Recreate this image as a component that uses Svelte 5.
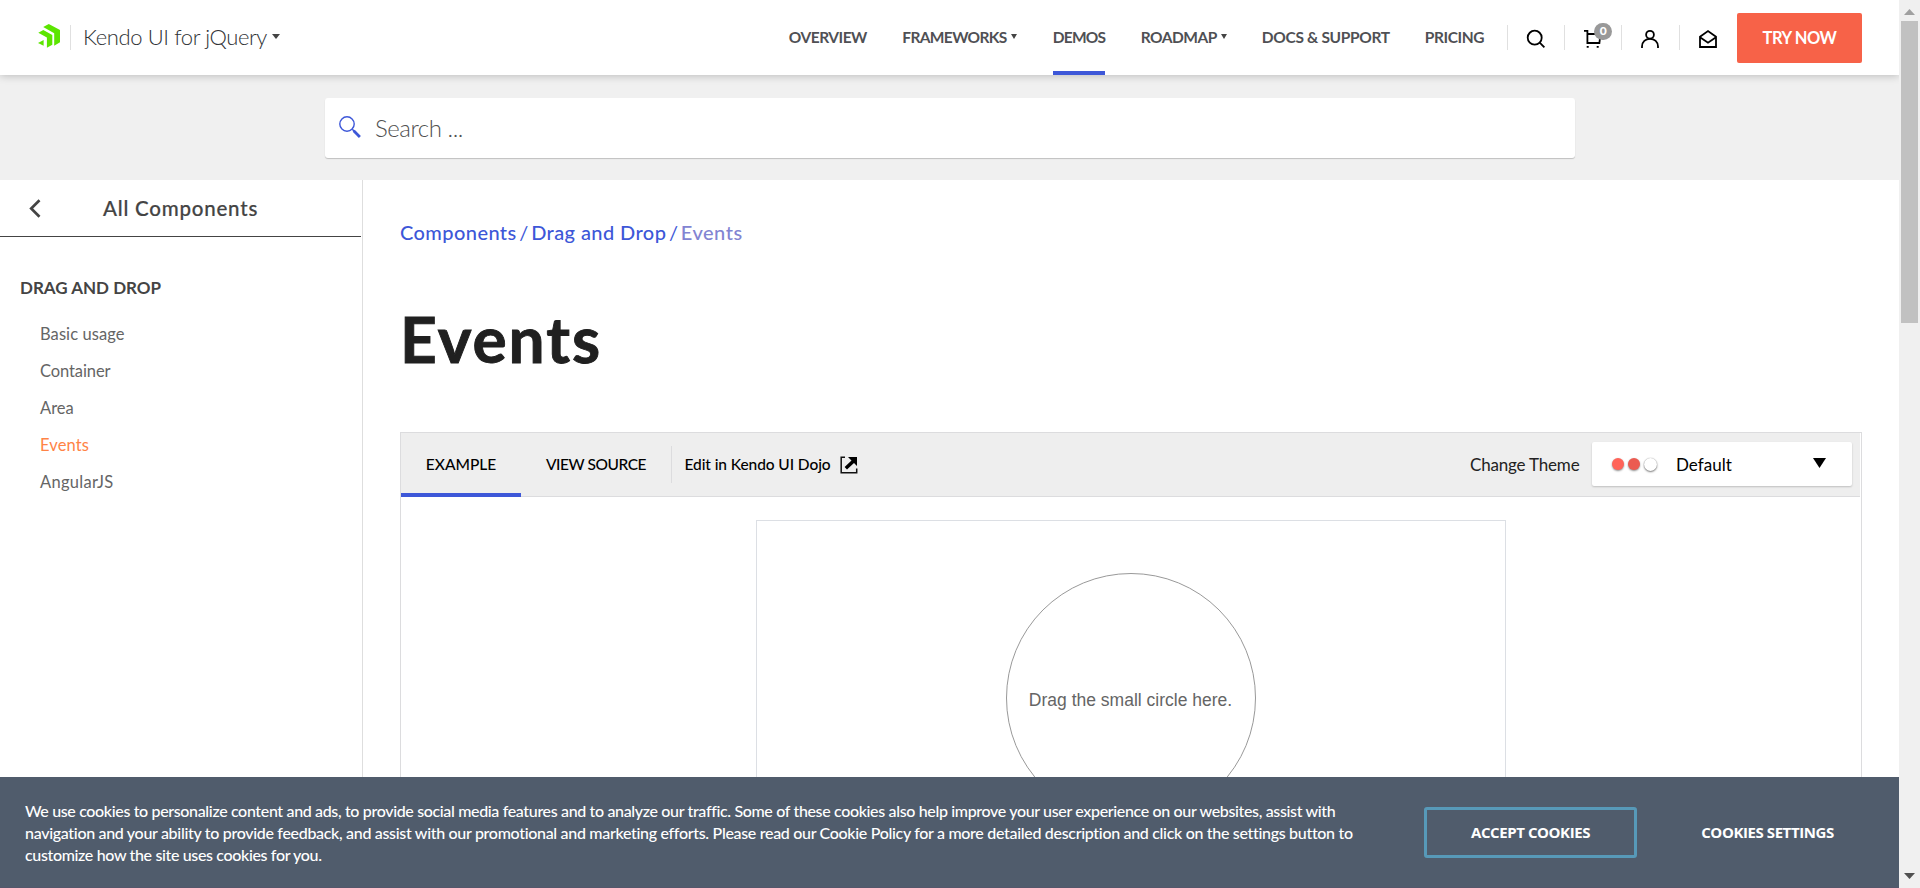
<script>
  const nav = [
    { label: 'OVERVIEW', w: 113.5, ls: -0.5 },
    { label: 'FRAMEWORKS', w: 150.5, ls: -0.65, caret: true },
    { label: 'DEMOS', w: 88, ls: -0.78, active: true },
    { label: 'ROADMAP', w: 121, ls: -0.5, caret: true },
    { label: 'DOCS & SUPPORT', w: 163, ls: -0.32 },
    { label: 'PRICING', w: 82, ls: -0.42 }
  ];
  const items = [
    { label: 'Basic usage', ls: 0.08 },
    { label: 'Container', ls: -0.1 },
    { label: 'Area', ls: 0 },
    { label: 'Events', ls: 0.1, active: true },
    { label: 'AngularJS', ls: 0.3 }
  ];
</script>

<div class="page">
  <div class="view">
    <header>
      <svg class="logo" width="22" height="24" viewBox="0 0 22 24" fill="#5ce500">
        <path d="M5.2 2.9 10.8 0 22 6.1v12.200l-5.800 3.500V9.300z" />
        <path d="M.3 8.800 5.300 6.100 14.300 10.900V20.700L8.900 23.800V13.500z" />
        <path d="M0 19 5.600 16.100V21.800z" />
      </svg>
      <i class="vr"></i>
      <span class="product">Kendo UI for jQuery</span>
      <i class="caret"></i>
      <nav>
        {#each nav as n}
          <a style="width:{n.w}px">
            <span class:active={n.active} style="letter-spacing:{n.ls}px">{n.label}</span>
            {#if n.caret}<i class="caret"></i>{/if}
          </a>
        {/each}
      </nav>
      <div class="tools">
        <a>
          <svg width="20" height="20" viewBox="0 0 20 20"><circle cx="8.700" cy="8.700" r="7" /><path d="m13.700 13.700 4.700 4.700" /></svg>
        </a>
        <a>
          <svg width="20" height="20" viewBox="0 0 20 20"><path d="M1 1.900h3.400V14h12l1-8.600V5H4.400" /><path d="M3.700 17.800h2M13.700 17.800h2" /></svg>
          <b>0</b>
        </a>
        <a>
          <svg width="20" height="20" viewBox="0 0 20 20"><circle cx="10" cy="5.700" r="3.900" /><path d="M2 19v-1.500C2 12.800 5.500 9.800 10 9.800s8 3 8 7.700V19" /></svg>
        </a>
        <a>
          <svg width="20" height="20" viewBox="0 0 20 20"><path d="M2 7.700 10 2l8 5.700V18H2zM2 8.200l8 5.500 8-5.500" /></svg>
        </a>
      </div>
      <a class="try">TRY NOW</a>
    </header>

    <div class="searchbar">
      <div class="search">
        <svg width="24" height="24" viewBox="0 0 24 24" fill="none" stroke="#3d57d8"><circle cx="9" cy="9" r="7.200" stroke-width="1.400" /><path d="m14.300 14.300 2 2" stroke-width="1.500" /><path d="m15.700 15.700 6.200 6.200" stroke-width="2.800" /></svg>
        <span>Search ...</span>
      </div>
    </div>

    <div class="body">
      <aside>
        <div class="all">
          <svg width="12" height="19" viewBox="0 0 12 19"><path d="M10.500 1.200 2.200 9.500l8.300 8.300" fill="none" stroke="#444" stroke-width="2.700" /></svg>
          <span>All Components</span>
        </div>
        <h4>DRAG AND DROP</h4>
        <ul>
          {#each items as i}
            <li class:active={i.active} style="letter-spacing:{i.ls}px">{i.label}</li>
          {/each}
        </ul>
      </aside>

      <main>
        <div class="crumbs">
          <a>Components</a><i>/</i><a>Drag and Drop</a><i>/</i><span>Events</span>
        </div>
        <h1>Events</h1>
        <section class="panel">
          <div class="toolbar">
            <div class="tab on">EXAMPLE</div>
            <div class="tab src">VIEW SOURCE</div>
            <i class="sep"></i>
            <div class="dojo">
              <span>Edit in Kendo UI Dojo</span>
              <svg width="18" height="18" viewBox="0 0 18 18"><path d="M5 1.200H1.200v15.500h15.500V12.500" fill="none" stroke="#111" stroke-width="1.500" /><path d="M8 1h9v9l-3-3-7 6.500L4.600 11 11.500 4.500z" fill="#000" /></svg>
            </div>
            <div class="theme">
              <span class="lbl">Change Theme</span>
              <div class="select">
                <i class="dot a"></i><i class="dot b"></i><i class="dot c"></i>
                <span>Default</span>
                <svg width="13" height="10" viewBox="0 0 13 10"><path d="M0 0h13L6.500 10z" /></svg>
              </div>
            </div>
          </div>
          <div class="demo">
            <div class="target">Drag the small circle here.</div>
          </div>
        </section>
      </main>
    </div>

    <footer>
      <p>
        <span class="l1">We use cookies to personalize content and ads, to provide social media features and to analyze our traffic. Some of these cookies also help improve your user experience on our websites, assist with</span>
        <span class="l2">navigation and your ability to provide feedback, and assist with our promotional and marketing efforts. Please read our Cookie Policy for a more detailed description and click on the settings button to</span>
        <span>customize how the site uses cookies for you.</span>
      </p>
      <button class="accept">ACCEPT COOKIES</button>
      <button class="settings">COOKIES SETTINGS</button>
    </footer>
  </div>

  <div class="scroll">
    <svg width="11" height="6" viewBox="0 0 11 6"><path d="M0 6 5.500 0 11 6z" fill="#a0a0a0" /></svg>
    <i class="thumb"></i>
    <svg class="down" width="11" height="6" viewBox="0 0 11 6"><path d="M0 0h11L5.500 6z" fill="#505050" /></svg>
  </div>
</div>

<style>
  :global(body) { margin: 0; }
  .page { display: flex; width: 1920px; height: 888px; overflow: hidden; font-family: Lato, sans-serif; background: #fff; color: #444; }
  .page * { box-sizing: border-box; }
  i { display: block; flex: none; }
  svg { flex: none; display: block; }
  .view { position: relative; width: 1899px; height: 888px; overflow: hidden; flex: none; }

  header { position: relative; z-index: 2; display: flex; align-items: center; height: 75px; padding-left: 38px; background: #fff; box-shadow: 0 1px 8px rgba(0, 0, 0, 0.22); }
  .logo { margin-bottom: 4px; }
  .vr { width: 1px; height: 25px; margin-left: 10px; background: #e0e0e0; }
  .product { width: 189px; margin: 0 0 2px 12px; font-size: 22px; font-weight: 300; letter-spacing: -0.4px; white-space: nowrap; color: #303336; }
  .caret { width: 0; height: 0; border: solid transparent; border-width: 5px 4px 0; border-top-color: #444; margin: 0 0 2px 0; }
  nav { display: flex; margin-left: auto; height: 75px; font-size: 15.500px; font-weight: 700; color: #4f5054; }
  nav a { display: flex; align-items: center; flex: none; }
  nav span { line-height: 74px; height: 75px; white-space: nowrap; }
  nav .active { border-bottom: 4px solid #3d57d8; }
  nav .caret { border-width: 5px 3.500px 0; margin: 0 0 3px 4px; }
  .tools { display: flex; margin-right: -5px; }
  .tools a { position: relative; width: 57.300px; height: 25px; padding: 4px 0 0 18px; border-left: 1px solid #e0e0e0; }
  .tools svg { fill: none; stroke: #000; stroke-width: 1.800; }
  .tools b { position: absolute; left: 29px; top: -2px; width: 18px; height: 17px; border-radius: 9px; background: #999; color: #fff; font-size: 12px; font-weight: 900; line-height: 16px; text-align: center; }
  .try { width: 125px; height: 50px; margin: 1px 37px 0 6px; border-radius: 2px; background: #f76248; color: #fff; font-size: 16.500px; font-weight: 700; line-height: 51px; letter-spacing: -0.440px; text-align: center; }

  .searchbar { display: flex; height: 105px; padding: 23px 0 0 325px; background: #f0f0f0; }
  .search { display: flex; align-items: center; width: 1250px; height: 60px; padding-left: 13px; border-radius: 3px; background: #fff; box-shadow: 0 1px 1px rgba(0, 0, 0, 0.2); font-size: 24px; font-weight: 300; letter-spacing: -0.450px; color: #505050; }
  .search svg { margin-bottom: 2px; }
  .search span { margin: 0 0 2px 13px; }

  .body { display: flex; height: 708px; }
  aside { width: 363px; border-right: 1px solid #dedede; flex: none; }
  .all { display: flex; align-items: center; width: 361px; height: 57px; padding-left: 29px; border-bottom: 1px solid #444; font-size: 20.500px; font-weight: 500; letter-spacing: 0.780px; }
  .all span { margin-left: 62px; -webkit-text-stroke: 0.2px currentColor; }
  h4 { margin: 32px 0 0 20px; height: 38px; font-size: 17px; font-weight: 700; line-height: 37px; }
  ul { list-style: none; margin: 9px 0 0 40px; padding: 0; font-size: 16.500px; line-height: 37px; color: #656565; }
  li.active { color: #ff8346; }

  main { width: 1536px; padding: 37px 37px 0; }
  .crumbs { display: flex; height: 30px; font-size: 20px; line-height: 30px; font-weight: 500; letter-spacing: 0.420px; color: #3d57d8; }
  .crumbs i { width: 14.500px; text-align: center; font-style: normal; font-weight: 400; letter-spacing: 0; }
  .crumbs span { color: #8284d2; letter-spacing: 0.500px; }
  h1 { margin: 52px 0 0; height: 80px; font-size: 64px; line-height: 80px; font-weight: 700; letter-spacing: 2px; color: #202020; -webkit-text-stroke: 0.900px #202020; }
  .panel { margin-top: 53px; width: 1462px; height: 600px; border: 1px solid #dcdcde; padding-right: 1px; }
  .toolbar { display: flex; align-items: center; height: 64px; background: #eee; border-bottom: 1px solid #dcdcde; font-size: 15.500px; font-weight: 500; color: #000; }
  .tab { width: 120px; height: 64px; line-height: 62px; text-align: center; align-self: flex-start; }
  .tab.on { border-bottom: 4px solid #3d57d8; position: relative; }
  .src { width: 150px; letter-spacing: -0.440px; }
  .sep { width: 1px; height: 37px; background: #dcdcde; }
  .dojo { display: flex; align-items: center; margin-left: 12.500px; }
  .dojo span { width: 155px; letter-spacing: -0.090px; line-height: 20px; margin-bottom: 2px; }
  .theme { display: flex; align-items: center; margin-left: auto; margin-right: 8px; font-size: 17px; font-weight: 400; color: #222; }
  .lbl { width: 122px; letter-spacing: -0.180px; }
  .select { display: flex; align-items: center; width: 260px; height: 44px; margin-bottom: 1px; padding: 0 26px 0 20px; border-radius: 2px; background: #fff; box-shadow: 0 1px 2px rgba(0, 0, 0, 0.2); color: #000; }
  .dot { width: 12px; height: 12px; border-radius: 50%; margin-right: 4px; box-shadow: 0 1px 2px rgba(0, 0, 0, 0.45); }
  .a { background: #ff6358; }
  .b { background: #eb5b51; }
  .c { width: 13px; height: 13px; background: #fff; box-shadow: 0 1px 2px rgba(0, 0, 0, 0.5), 0 0 1px rgba(0, 0, 0, 0.35); }
  .select span { margin-left: 15px; letter-spacing: 0.050px; }
  .select svg { margin-left: auto; margin-bottom: 2px; }
  .demo { display: flex; justify-content: center; width: 750px; height: 500px; margin: 23px auto 0; border: 1px solid #dcdfe4; padding-top: 52px; }
  .target { width: 250px; height: 250px; border: 1px solid #999; border-radius: 50%; text-align: center; font: 17.500px/252px "Liberation Sans", Arial, sans-serif; color: #656565; white-space: nowrap; }

  footer { position: absolute; left: 0; bottom: 0; z-index: 3; display: flex; width: 1899px; height: 111px; padding-left: 25px; background: #505c6c; border-bottom: 1px solid #55566a; color: #fff; }
  p { margin: 0; padding-top: 23px; width: 1399px; font-size: 16px; font-weight: 500; line-height: 22px; letter-spacing: -0.350px; flex: none; }
  p span { display: block; white-space: nowrap; }
  .l2 { letter-spacing: -0.315px; }
  button { height: 51px; margin: 30px 0 0; padding: 0; border-radius: 3px; background: none; color: #fff; font: 700 15px/1 "Open Sans", sans-serif; letter-spacing: -0.420px; flex: none; }
  .accept { width: 213px; border: 3px solid #5799b8; }
  .settings { width: 261px; border: 0; }

  .scroll { display: flex; flex-direction: column; align-items: center; width: 21px; height: 888px; padding: 9px 0; background: #f0f0f0; }
  .thumb { width: 17px; height: 302px; margin-top: 6px; background: #c1c1c1; }
  .down { margin-top: auto; }
</style>
